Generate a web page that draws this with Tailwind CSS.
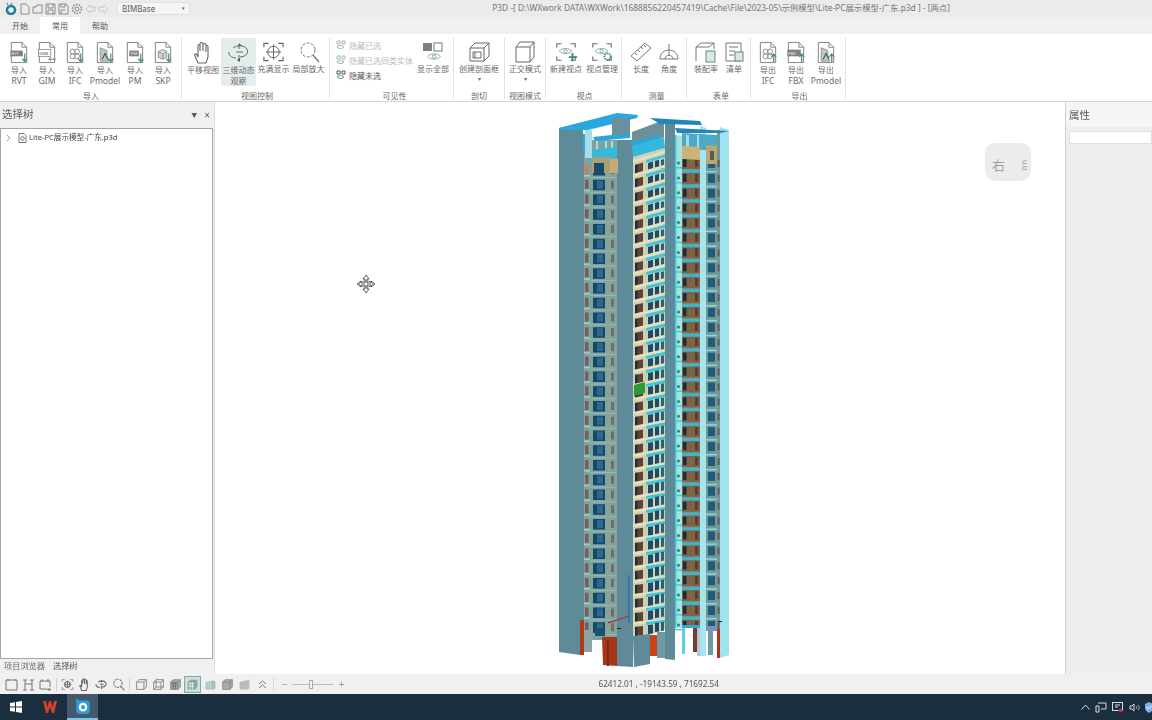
<!DOCTYPE html>
<html lang="zh-CN">
<head>
  <meta charset="UTF-8" />
  <title>P3D</title>
  <script src="https://cdn.jsdelivr.net/npm/@tailwindcss/browser@4"></script>
</head>
<body class="bg-white">
  <svg class="hidden" width="0" height="0">
    <symbol id="doc" viewBox="0 0 20 24"><path d="M2 1.5h11l5 5v16H2z M13 1.5v5h5" fill="none" stroke="#808080" stroke-width="1"/></symbol>
    <symbol id="arr-down" viewBox="0 0 20 24"><path d="M16 13v8 M13.5 18.5l2.5 3 2.5-3" fill="none" stroke="#4d8a7c" stroke-width="1.3"/></symbol>
    <symbol id="arr-up" viewBox="0 0 20 24"><path d="M16 22v-8 M13.5 16.5l2.5-3 2.5 3" fill="none" stroke="#4d8a7c" stroke-width="1.3"/></symbol>
    <symbol id="clover" viewBox="0 0 20 24"><g fill="none" stroke="#8a8a8a" stroke-width="1"><circle cx="7.5" cy="11" r="2.6"/><circle cx="12" cy="11" r="2.6"/><circle cx="7.5" cy="16" r="2.6"/><circle cx="12" cy="16" r="2.6"/></g></symbol>
    <symbol id="pm" viewBox="0 0 20 24"><path d="M5 7l7 3v5l2 6H5z" fill="#b9c9c6" stroke="#888" stroke-width=".8"/><path d="M7 19l3-6 3 6" fill="none" stroke="#555" stroke-width="1.2"/></symbol>
    <symbol id="eye" viewBox="0 0 20 12"><path d="M1 6c3-5 15-5 18 0-3 5-15 5-18 0z" fill="none" stroke="#5c8a86" stroke-width="1"/><circle cx="10" cy="6" r="2.4" fill="none" stroke="#5c8a86"/></symbol>
    <symbol id="corners" viewBox="0 0 24 22"><path d="M2 6V2h5 M17 2h5v4 M2 16v4h5 M22 16v4h-5" fill="none" stroke="#666" stroke-width="1.2"/></symbol>
    <symbol id="box" viewBox="0 0 16 16"><path d="M2 5h9v9H2z M2 5l3-3h9v9l-3 3 M11 5l3-3" fill="none" stroke="#777" stroke-width="1"/></symbol>
    <symbol id="solid" viewBox="0 0 16 16"><path d="M2 5l3-3h9v9l-3 3H2z" fill="#a3adab" stroke="#777" stroke-width=".8"/><path d="M2 5h9v9 M11 5l3-3" fill="none" stroke="#777" stroke-width=".8"/></symbol>
  </svg>

  <div class="w-[1152px] h-[720px] overflow-hidden flex flex-col blur-[0.45px] font-['Noto_Sans','Noto_Sans_CJK_SC',sans-serif] text-[#6a6a6a]">

    <!-- title bar -->
    <div class="h-[17px] bg-[#ebebeb] flex items-center pl-[5px] gap-[2px] shrink-0">
      <svg class="w-[12px] h-[13px]" viewBox="0 0 12 13"><circle cx="6" cy="8" r="4" fill="none" stroke="#1f7f9c" stroke-width="2.6"/><path d="M3 3L2 1M6 3l1-2" stroke="#3f8f7f" stroke-width="1.2"/></svg>
      <svg class="w-[11px] h-[12px]" viewBox="0 0 11 12"><path d="M2 1h5l3 3v7H2z" fill="none" stroke="#8c8c8c"/></svg>
      <svg class="w-[11px] h-[12px]" viewBox="0 0 11 12"><path d="M1 4h3l1-2h5v8H1z" fill="none" stroke="#8c8c8c"/></svg>
      <svg class="w-[11px] h-[12px]" viewBox="0 0 11 12"><path d="M1 1h9v10H1z M3 1v4h5V1 M3 11V7h5v4" fill="none" stroke="#8c8c8c"/></svg>
      <svg class="w-[11px] h-[12px]" viewBox="0 0 11 12"><path d="M1 1h7l2 2v8H1z M3 1v3h4V1 M3 11V7h4" fill="none" stroke="#8c8c8c"/></svg>
      <svg class="w-[12px] h-[12px]" viewBox="0 0 12 12"><circle cx="6" cy="6" r="2" fill="none" stroke="#8c8c8c"/><circle cx="6" cy="6" r="4.5" fill="none" stroke="#8c8c8c" stroke-width="1.6" stroke-dasharray="1.6 1.2"/></svg>
      <svg class="w-[11px] h-[10px]" viewBox="0 0 11 10"><path d="M5 1L1 5l4 4V7h5V3H5z" fill="none" stroke="#c8c8c8"/></svg>
      <svg class="w-[11px] h-[10px]" viewBox="0 0 11 10"><path d="M6 1l4 4-4 4V7H1V3h5z" fill="none" stroke="#c8c8c8"/></svg>
      <div class="ml-[6px] w-[73px] h-[13px] bg-[#f5f5f5] border border-[#e0e0e0] flex items-center justify-between px-[4px] text-[8px] leading-none text-[#555]"><span>BIMBase</span><span class="text-[5px]">▾</span></div>
      <div class="flex-1 flex justify-end pr-[202px] text-[8.4px] leading-none text-[#777] whitespace-nowrap">P3D -[ D:\WXwork DATA\WXWork\1688856220457419\Cache\File\2023-05\示例模型\Lite-PC展示模型-广东.p3d ] - [两点]</div>
    </div>

    <!-- tabs -->
    <div class="h-[17px] bg-[#f0f0f0] flex text-[8px] leading-[17px] text-center text-[#555] shrink-0">
      <div class="w-[40px]">开始</div>
      <div class="w-[40px] bg-white">常用</div>
      <div class="w-[40px]">帮助</div>
    </div>

    <!-- ribbon -->
    <div class="h-[68px] bg-white border-b border-[#d4d4d4] flex pt-[4px] text-[8px] leading-[11px] text-center whitespace-nowrap shrink-0">
      <div class="w-[182px] h-[61px] border-r border-[#e2e2e2] pl-[5px]">
        <div class="h-[52px] flex">
          <div class="w-[28px] flex flex-col items-center pt-[3px]"><svg class="w-[20px] h-[23px]" viewBox="0 0 20 24"><use href="#doc"/><rect x="1" y="10" width="13" height="6" fill="#808080"/><text x="2" y="15" font-size="4.5" fill="#eee">RVT</text><use href="#arr-down"/></svg><span>导入</span><span class="text-[8.5px]">RVT</span></div>
          <div class="w-[28px] flex flex-col items-center pt-[3px]"><svg class="w-[20px] h-[23px]" viewBox="0 0 20 24"><use href="#doc"/><rect x="1" y="9" width="13" height="7" fill="#fff" stroke="#808080" stroke-width=".8"/><text x="2" y="15" font-size="4.5" fill="#444">GIM</text><path d="M19 19h-7m2-2l-2 2 2 2" fill="none" stroke="#4d8a7c"/></svg><span>导入</span><span class="text-[8.5px]">GIM</span></div>
          <div class="w-[28px] flex flex-col items-center pt-[3px]"><svg class="w-[20px] h-[23px]" viewBox="0 0 20 24"><use href="#doc"/><use href="#clover"/><use href="#arr-down"/></svg><span>导入</span><span class="text-[8.5px]">IFC</span></div>
          <div class="w-[32px] flex flex-col items-center pt-[3px]"><svg class="w-[20px] h-[23px]" viewBox="0 0 20 24"><use href="#doc"/><use href="#pm"/><use href="#arr-down"/></svg><span>导入</span><span class="text-[8.5px]">Pmodel</span></div>
          <div class="w-[28px] flex flex-col items-center pt-[3px]"><svg class="w-[20px] h-[23px]" viewBox="0 0 20 24"><use href="#doc"/><rect x="4" y="10" width="10" height="6" fill="#808080"/><text x="5.5" y="15" font-size="4.5" fill="#eee">PM</text><use href="#arr-down"/></svg><span>导入</span><span class="text-[8.5px]">PM</span></div>
          <div class="w-[28px] flex flex-col items-center pt-[3px]"><svg class="w-[20px] h-[23px]" viewBox="0 0 20 24"><use href="#doc"/><path d="M5 11l5-2 4 2v6l-4 2-5-2z M5 11l5 2 4-2 M10 13v6" fill="#cdd5d1" stroke="#808080" stroke-width=".8"/><use href="#arr-down"/></svg><span>导入</span><span class="text-[8.5px]">SKP</span></div>
        </div>
        <div class="leading-[12px] pr-[4px]">导入</div>
      </div>

      <div class="w-[148px] h-[61px] border-r border-[#e2e2e2] pl-[3px]">
        <div class="h-[52px] flex">
          <div class="w-[36px] flex flex-col items-center pt-[3px]"><svg class="w-[22px] h-[23px]" viewBox="0 0 22 23"><path d="M6 22l-3-7c-1-2 1-3 2-1l1 2V5c0-2 2-2 2 0v5V3c0-2 3-2 3 0v7V4c0-2 3-2 3 0v7V6c0-2 2-2 2 0v10l-2 6z" fill="none" stroke="#666" stroke-width="1.1"/></svg><span>平移视图</span></div>
          <div class="w-[35px] h-[48px] bg-[#e4ecec] flex flex-col items-center pt-[3px]"><svg class="w-[24px] h-[23px]" viewBox="0 0 24 23"><path d="M6 7c4-3 10-3 13 0 4 4 0 9-6 9M9 17c-4 0-8-3-7-6" fill="none" stroke="#666"/><path d="M12 3v5M12 14v6M9 11h7" fill="none" stroke="#666"/><path d="M12 2l3 3h-3zM10 19l3-2v4z" fill="#555"/></svg><span>三维动态</span><span>观察</span></div>
          <div class="w-[35px] flex flex-col items-center pt-[3px]"><svg class="w-[23px] h-[22px]" viewBox="0 0 24 22"><use href="#corners"/><circle cx="12" cy="11" r="6" fill="none" stroke="#666"/><path d="M12 3v16M4 11h16" stroke="#666"/></svg><span>充满显示</span></div>
          <div class="w-[35px] flex flex-col items-center pt-[3px]"><svg class="w-[22px] h-[22px]" viewBox="0 0 22 22"><circle cx="10" cy="9" r="7" fill="none" stroke="#777" stroke-dasharray="3 1.5"/><path d="M15 14l6 7" stroke="#777" stroke-width="1.3"/></svg><span>局部放大</span></div>
        </div>
        <div class="leading-[12px]">视图控制</div>
      </div>

      <div class="w-[124px] h-[61px] border-r border-[#e2e2e2] pl-[6px]">
        <div class="h-[52px] flex">
          <div class="w-[79px] flex flex-col gap-[4px] pt-[2px] text-left">
            <div class="flex items-center gap-[3px] text-[#bbb]"><svg class="w-[10px] h-[11px]" viewBox="0 0 10 11"><path d="M1 1h3v3H1zM6 1h3v3H6z" fill="none" stroke="#a8b8b4"/><path d="M1 7c2-2 5-2 7 0-2 2-5 2-7 0z" fill="none" stroke="#8fb0a8"/></svg><span>隐藏已选</span></div>
            <div class="flex items-center gap-[3px] text-[#bbb]"><svg class="w-[10px] h-[11px]" viewBox="0 0 10 11"><path d="M1 1h3v3H1zM6 1h3v3H6z" fill="none" stroke="#a8b8b4"/><path d="M1 7c2-2 5-2 7 0-2 2-5 2-7 0z" fill="none" stroke="#8fb0a8"/></svg><span>隐藏已选同类实体</span></div>
            <div class="flex items-center gap-[3px] text-[#555]"><svg class="w-[10px] h-[11px]" viewBox="0 0 10 11"><path d="M1 1h3v3H1zM6 1h3v3H6z" fill="none" stroke="#555"/><path d="M1 7c2-2 5-2 7 0-2 2-5 2-7 0z" fill="none" stroke="#4f8c80"/></svg><span>隐藏未选</span></div>
          </div>
          <div class="w-[36px] flex flex-col items-center pt-[3px]"><svg class="w-[24px] h-[22px]" viewBox="0 0 24 22"><rect x="2" y="2" width="9" height="8" fill="#808080"/><rect x="13" y="2" width="8" height="8" fill="none" stroke="#777"/><use href="#eye" x="6" y="11" width="14" height="9"/></svg><span>显示全部</span></div>
        </div>
        <div class="leading-[12px]">可见性</div>
      </div>

      <div class="w-[51px] h-[61px] border-r border-[#e2e2e2]">
        <div class="h-[52px] flex flex-col items-center pt-[3px]"><svg class="w-[22px] h-[22px]" viewBox="0 0 22 22"><path d="M2 7h14v13H2z M2 7l5-5h14v13l-5 5 M16 7l5-5" fill="none" stroke="#666"/><path d="M5 11h8v6H5z M7 11v6" fill="none" stroke="#666"/></svg><span>创建剖面框</span><span class="text-[6px] leading-[11px]">▾</span></div>
        <div class="leading-[12px]">剖切</div>
      </div>

      <div class="w-[41px] h-[61px] border-r border-[#e2e2e2]">
        <div class="h-[52px] flex flex-col items-center pt-[3px]"><svg class="w-[20px] h-[22px]" viewBox="0 0 20 22"><path d="M1 6h14v15H1z M1 6l4-5h14v15l-4 5 M15 6l4-5" fill="none" stroke="#666"/></svg><span>正交模式</span><span class="text-[6px] leading-[11px]">▾</span></div>
        <div class="leading-[12px]">视图模式</div>
      </div>

      <div class="w-[76px] h-[61px] border-r border-[#e2e2e2] pl-[2px]">
        <div class="h-[52px] flex">
          <div class="w-[36px] flex flex-col items-center pt-[3px]"><svg class="w-[22px] h-[22px]" viewBox="0 0 24 22"><use href="#corners"/><use href="#eye" x="4" y="5" width="15" height="10"/><path d="M19 12v9M15 16.500h9" stroke="#3d8a78" stroke-width="2"/></svg><span>新建视点</span></div>
          <div class="w-[36px] flex flex-col items-center pt-[3px]"><svg class="w-[22px] h-[22px]" viewBox="0 0 24 22"><use href="#corners"/><use href="#eye" x="4" y="5" width="15" height="10"/><circle cx="18" cy="16" r="3.500" fill="none" stroke="#3d8a78" stroke-width="2" stroke-dasharray="1.500 1"/></svg><span>视点管理</span></div>
        </div>
        <div class="leading-[12px]">视点</div>
      </div>

      <div class="w-[65px] h-[61px] border-r border-[#e2e2e2] pl-[5px]">
        <div class="h-[52px] flex">
          <div class="w-[28px] flex flex-col items-center pt-[3px]"><svg class="w-[22px] h-[22px]" viewBox="0 0 22 22"><path d="M1 15L15 2l6 5L7 20z M5 12l2 2M8 9l2 2M11 6l2 2M14 4l2 2" fill="none" stroke="#777"/></svg><span>长度</span></div>
          <div class="w-[28px] flex flex-col items-center pt-[3px]"><svg class="w-[22px] h-[22px]" viewBox="0 0 22 22"><path d="M2 18C2 6 20 6 20 18z M7 18c0-5 8-5 8 0 M11 3v11" fill="none" stroke="#777"/></svg><span>角度</span></div>
        </div>
        <div class="leading-[12px]">测量</div>
      </div>

      <div class="w-[64px] h-[61px] border-r border-[#e2e2e2] pl-[5px]">
        <div class="h-[52px] flex">
          <div class="w-[28px] flex flex-col items-center pt-[3px]"><svg class="w-[22px] h-[22px]" viewBox="0 0 22 22"><path d="M1 20V6h13l5-4 M1 6l5-4h13v6" fill="none" stroke="#777"/><rect x="11" y="10" width="9" height="11" fill="#dbe7e4" stroke="#5c8a86"/></svg><span>装配率</span></div>
          <div class="w-[28px] flex flex-col items-center pt-[3px]"><svg class="w-[20px] h-[22px]" viewBox="0 0 20 22"><path d="M2 2h15v18H2z M5 6h9M5 10h6M5 14h5" fill="none" stroke="#777"/><rect x="11" y="11" width="8" height="9" fill="#dbe7e4" stroke="#5c8a86"/></svg><span>清单</span></div>
        </div>
        <div class="leading-[12px]">表单</div>
      </div>

      <div class="w-[95px] h-[61px] border-r border-[#e2e2e2] pl-[3px]">
        <div class="h-[52px] flex">
          <div class="w-[28px] flex flex-col items-center pt-[3px]"><svg class="w-[20px] h-[23px]" viewBox="0 0 20 24"><use href="#doc"/><use href="#clover"/><use href="#arr-up"/></svg><span>导出</span><span class="text-[8.5px]">IFC</span></div>
          <div class="w-[28px] flex flex-col items-center pt-[3px]"><svg class="w-[20px] h-[23px]" viewBox="0 0 20 24"><use href="#doc"/><rect x="1" y="9" width="14" height="7" fill="#808080"/><text x="2" y="15" font-size="4.500" fill="#eee">FBX</text><use href="#arr-up"/></svg><span>导出</span><span class="text-[8.5px]">FBX</span></div>
          <div class="w-[32px] flex flex-col items-center pt-[3px]"><svg class="w-[20px] h-[23px]" viewBox="0 0 20 24"><use href="#doc"/><use href="#pm"/><use href="#arr-up"/></svg><span>导出</span><span class="text-[8.5px]">Pmodel</span></div>
        </div>
        <div class="leading-[12px]">导出</div>
      </div>
    </div>

    <!-- main area -->
    <div class="flex-1 min-h-0 flex">
      <!-- selection tree -->
      <div class="w-[215px] bg-[#f0f0f0] flex flex-col border-r border-[#dcdcdc] shrink-0">
        <div class="h-[26px] flex items-center pl-[2px] pr-[4px] text-[10.5px] text-[#5a5a5a]">
          <span class="flex-1">选择树</span>
          <span class="text-[6px] mr-[7px]">▼</span>
          <span class="text-[10px] leading-none">×</span>
        </div>
        <div class="flex-1 mr-[1px] bg-white border border-[#a5a5a5] pl-[5px] pt-[3px]">
          <div class="flex items-center h-[12px] text-[7.6px] leading-none text-[#444] whitespace-nowrap">
            <svg class="w-[5px] h-[8px] mr-[7px]" viewBox="0 0 5 8"><path d="M1 1l3 3-3 3" fill="none" stroke="#999"/></svg>
            <svg class="w-[9px] h-[10px] mr-[2px]" viewBox="0 0 9 10"><path d="M1 .500h5l2 2v7H1z" fill="none" stroke="#555" stroke-width=".8"/><circle cx="4.500" cy="5.500" r="1.800" fill="none" stroke="#555" stroke-width=".8"/></svg>
            <span>Lite-PC展示模型-广东.p3d</span>
          </div>
        </div>
        <div class="h-[15px] flex items-center pl-[4px] gap-[8px] text-[8.2px] leading-none text-[#6a6a6a]"><span>项目浏览器</span><span class="text-[#555]">选择树</span></div>
      </div>

      <!-- 3D viewport -->
      <div class="relative flex-1 bg-white">
        <svg id="model" class="block w-[850px] h-[572px] blur-[0.5px]" viewBox="215 102 850 572"></svg>
        <!-- view cube -->
        <div class="absolute left-[770px] top-[41px] w-[46px] h-[38px] rounded-[10px] bg-[#ececec] flex items-center justify-between pl-[7px] pr-[1px] pt-[6px] text-[#a0a0a0]"><span class="text-[13px] leading-none">右</span><span class="text-[11px] leading-none scale-x-50">后</span></div>
        <!-- orbit cursor -->
        <svg class="absolute left-[141px] top-[172px] w-[20px] h-[20px]" viewBox="0 0 20 20"><path d="M10 1l3 4h-2v4h4V7l4 3-4 3v-2h-4v4h2l-3 4-3-4h2v-4H5v2l-4-3 4-3v2h4V5H7z" fill="#fff" stroke="#333" stroke-width=".8"/><ellipse cx="10" cy="10" rx="7" ry="3" fill="none" stroke="#555" stroke-width=".7"/></svg>
      </div>

      <!-- properties -->
      <div class="w-[87px] bg-[#eeeeee] border-l border-[#d0d0d0] flex flex-col shrink-0">
        <div class="h-[25px] bg-[#f5f5f5] pl-[3px] text-[10.5px] leading-[27px] text-[#5a5a5a]">属性</div>
        <div class="h-[13px] mt-[4px] ml-[3px] bg-white border border-[#e0e0e0]"></div>
      </div>
    </div>

    <!-- status bar -->
    <div class="h-[20px] bg-[#f0f0f0] flex items-center pl-[5px] shrink-0">
      <svg class="w-[13px] h-[13px] mr-[4px]" viewBox="0 0 13 13"><path d="M1 2h11v10H1z M3 1v2M10 1v2" fill="none" stroke="#777"/></svg>
      <svg class="w-[13px] h-[13px] mr-[4px]" viewBox="0 0 13 13"><path d="M3 2v10M10 2v10M1 2h4M8 2h4M1 12h4M8 12h4M3 6h7" fill="none" stroke="#777"/></svg>
      <svg class="w-[13px] h-[13px]" viewBox="0 0 13 13"><path d="M1 3h10v6M1 3v8h7 M3 1v3M9 1v3M10 10v3M8 11.500h4" fill="none" stroke="#777"/></svg>
      <div class="w-px h-[13px] bg-[#d0d0d0] ml-[4px] mr-[4px]"></div>
      <svg class="w-[13px] h-[13px] mr-[4px]" viewBox="0 0 24 22"><use href="#corners"/><circle cx="12" cy="11" r="5" fill="none" stroke="#666" stroke-width="2"/><path d="M12 4v14M5 11h14" stroke="#666" stroke-width="1.500"/></svg>
      <svg class="w-[13px] h-[13px] mr-[4px]" viewBox="0 0 22 23"><path d="M6 22l-3-7c-1-2 1-3 2-1l1 2V5c0-2 2-2 2 0v5V3c0-2 3-2 3 0v7V4c0-2 3-2 3 0v7V6c0-2 2-2 2 0v10l-2 6z" fill="none" stroke="#666" stroke-width="1.800"/></svg>
      <svg class="w-[13px] h-[13px] mr-[4px]" viewBox="0 0 24 23"><path d="M6 7c4-3 10-3 13 0 4 4 0 9-6 9M9 17c-4 0-8-3-7-6M12 3v5M12 14v6M9 11h7" fill="none" stroke="#666" stroke-width="2"/></svg>
      <svg class="w-[13px] h-[13px]" viewBox="0 0 22 22"><circle cx="10" cy="9" r="7" fill="none" stroke="#777" stroke-width="1.800" stroke-dasharray="3 1.500"/><path d="M15 14l6 7" stroke="#777" stroke-width="2"/></svg>
      <div class="w-px h-[13px] bg-[#d0d0d0] ml-[4px] mr-[5px]"></div>
      <svg class="w-[13px] h-[13px] mr-[4px]" viewBox="0 0 16 16"><use href="#box"/></svg>
      <svg class="w-[13px] h-[13px] mr-[4px]" viewBox="0 0 16 16"><use href="#box"/><path d="M5 2v9h9M5 11l-3 3" fill="none" stroke="#777"/></svg>
      <svg class="w-[13px] h-[13px] mr-[2px]" viewBox="0 0 16 16"><use href="#solid"/><path d="M3 7h7M3 10h7M5 5v9M8 5v9" stroke="#5f7370" stroke-width="1"/></svg>
      <div class="w-[17px] h-[17px] bg-[#c9e0dd] border border-[#7fa8a4] flex items-center justify-center mr-[3px]"><svg class="w-[13px] h-[13px]" viewBox="0 0 16 16"><path d="M2 5l3-3h9v9l-3 3H2z" fill="#8ba7a3"/><path d="M3 7h7M3 10h7M5 5v9M8 5v9" stroke="#e6f0ee" stroke-width="1"/></svg></div>
      <svg class="w-[13px] h-[13px] mr-[4px]" viewBox="0 0 16 16"><path d="M2 5l10-2 2 2v8l-3 1H2z" fill="#a7bdb9"/><path d="M3 7h7M3 10h7M5 5v9M8 5v9" stroke="#eef" stroke-width="1" stroke-dasharray="1 1"/></svg>
      <svg class="w-[13px] h-[13px] mr-[4px]" viewBox="0 0 16 16"><use href="#solid"/></svg>
      <svg class="w-[13px] h-[13px] mr-[4px]" viewBox="0 0 16 16"><path d="M2 5l12-3v11l-3 1H2z" fill="#b8bcbb"/></svg>
      <svg class="w-[9px] h-[9px] ml-[3px]" viewBox="0 0 9 9"><path d="M1 4l3.500-3L8 4M1 8l3.500-3L8 8" fill="none" stroke="#777"/></svg>
      <div class="w-px h-[12px] bg-[#d8d8d8] ml-[6px] mr-[8px]"></div>
      <span class="text-[10px] leading-none text-[#999]">−</span>
      <div class="relative w-[41px] h-px bg-[#bbb] mx-[4px]"><div class="absolute left-[17px] top-[-4px] w-[4px] h-[9px] bg-[#f5f5f5] border border-[#aaa]"></div></div>
      <span class="text-[10px] leading-none text-[#999] ml-[2px]">+</span>
      <div class="flex-1 pl-[254px] text-[8.2px] leading-none text-[#555] whitespace-nowrap">62412.01 , -19143.59 , 71692.54</div>
    </div>

    <!-- taskbar -->
    <div class="h-[26px] bg-[#1b2e3e] flex items-center shrink-0">
      <svg class="w-[12px] h-[12px] ml-[10px]" viewBox="0 0 12 12"><path d="M0 2l5-.8v4.400H0zM6 1l6-1v5.600H6zM0 6.400h5v4.400L0 10zM6 6.400h6V12l-6-1z" fill="#fff"/></svg>
      <svg class="w-[16px] h-[14px] ml-[20px]" viewBox="0 0 16 14"><path d="M1 1l3 12h2l2-6 2 6h2l3-12h-3l-1.500 6L9 1H7L5.500 7 4 1z" fill="#d8402a"/></svg>
      <div class="w-[31px] h-[26px] ml-[9px] bg-[#45596a] border-b-2 border-[#7cc4ee] flex items-center justify-center">
        <svg class="w-[16px] h-[18px]" viewBox="0 0 14 16"><path d="M1 1l3 2h6a3 3 0 013 3v6a3 3 0 01-3 3H4a3 3 0 01-3-3z" fill="#2a9fdc"/><circle cx="7" cy="9" r="2.800" fill="none" stroke="#fff" stroke-width="2"/></svg>
      </div>
      <div class="flex-1"></div>
      <svg class="w-[9px] h-[6px] mr-[5px]" viewBox="0 0 9 6"><path d="M.5 5.500l4-4.500 4 4.500" fill="none" stroke="#d8dde0"/></svg>
      <svg class="w-[12px] h-[11px] mr-[5px]" viewBox="0 0 12 11"><path d="M3 1h8v6H6M1 4h3v6H1z" fill="none" stroke="#d8dde0"/></svg>
      <svg class="w-[12px] h-[11px] mr-[5px]" viewBox="0 0 12 11"><rect x=".5" y=".5" width="10" height="8" fill="none" stroke="#d8dde0"/><path d="M3 3h5M3 5h3" stroke="#d8dde0"/><circle cx="8.500" cy="8.500" r="2" fill="#c0303a"/></svg>
      <svg class="w-[11px] h-[11px] mr-[5px]" viewBox="0 0 11 11"><path d="M1 4h2l2-2v7L3 7H1z" fill="none" stroke="#d8dde0"/><path d="M7 4c1 1 1 2 0 3M9 3c1.500 1.500 1.500 3.500 0 5" fill="none" stroke="#a8b0b5"/></svg>
      <svg class="w-[8px] h-[12px] mr-[-1px] shrink-0" viewBox="0 0 8 12"><path d="M4 1l4 2v4c0 2-2 4-4 5-2-1-4-3-4-5V3z" fill="#7fb0f0"/><path d="M1.500 6l2 2 3-3" fill="none" stroke="#fff"/></svg>
    </div>
  </div>

  <script>
    // tower model, drawn in page coordinates (viewBox starts at the viewport corner)
    const out = [];
    const poly = (pts, fill) => out.push(`<polygon points="${pts}" fill="${fill}"/>`);
    const rect = (x, y, w, h, fill) => out.push(`<rect x="${x}" y="${y}" width="${w}" height="${h}" fill="${fill}"/>`);
    const skew = (x, y, w, h, k, fill) => poly(`${x},${y} ${x + w},${y + k * w} ${x + w},${y + k * w + h} ${x},${y + h}`, fill);

    const wall = '#5f8b98';
    // big faces
    poly('559,128 584,122 584,655 580,655 559,652', wall);
    poly('584,134 617,128 617,640 584,640', '#7fa2a2');
    poly('617,138 633,134 633,667 617,666', wall);
    poly('633,157 665,148 665,630 633,640', '#cfd0b2');
    poly('665,122 675,124 675,660 665,659', wall);
    poly('675,135 682,136 682,628 675,628', '#a9e2dc');
    poly('682,150 700,151 700,626 682,628', '#94896a');
    poly('700,125 706,128 706,656 700,656', '#a5e5ee');
    poly('706,150 717,151 717,626 706,626', '#6f9a98');
    poly('717,130 720,130 720,658 717,658', '#6f9a98');
    poly('720,127 729,130 729,655 720,658', '#9fe3f0');

    // left facade
    for (let i = 0; i < 32; i++) {
      const y = 165 + 14.75 * i;
      rect(585, y, 3.5, 9, i === 0 ? '#d9795a' : '#7a5d55');
      rect(584, y + 10, 6, 1.5, '#a3cbd0');
      rect(593, y, 12, 10.500, '#174666');
      rect(597, y + 1, 6, 8, '#2a6a8c');
      rect(590, y + 12, 27, 1, '#9ab8b4');
      rect(611, y + 1, 3, 8, '#736f60');
      rect(605, y, 6, 11, '#86a596');
    }

    // centre facade, rows slope up to the right
    for (let i = 0; i < 34; i++) {
      const y = 163 + 14 * i;
      const k = -0.3 + 0.18 * (i / 33);
      skew(633, y - 3, 32, 3, k, '#e4dfbe');
      skew(646, y - 3, 19, 3, k, '#3fc6da');
      skew(635, y + 2, 8, 9, k, '#5e4434');
      skew(635, y + 2, 2.500, 9, k, '#1a2f40');
      skew(645, y, 2, 9, k, '#c9cdb8');
      skew(648, y, 5, 9, k, '#1f4a66');
      skew(655, y - 2, 4, 9, k, '#1f4a66');
      skew(661, y - 3, 3, 9, k, '#2c6075');
    }
    // green selected panel
    poly('634,385 645,382 645,393 634,396', '#2e9a35');

    // right facade
    for (let i = 0; i < 32; i++) {
      const y = 158 + 14.9 * i;
      rect(682, y - 3, 18, 3, '#38b5d4');
      rect(682, y, 18, 11, '#7c6446');
      rect(683, y + 1, 3.500, 8, '#1c2c34');
      rect(695, y + 1, 3, 8, '#5f3a2e');
      rect(708, y + 1, 7, 9, '#235a79');
      rect(706, y - 2, 11, 1.500, '#8fd5dc');
      out.push(`<circle cx="678.500" cy="${y + 5}" r="1.500" fill="#2f7f8e"/>`);
      rect(675, y + 9, 7, 1.500, '#3ccde0');
      rect(717.500, y + 2, 2, 7, '#6b5a4a');
    }
    rect(675, 135, 1.500, 493, '#3ccde0');

    // roof structure
    rect(583, 118, 50, 22, '#fff');
    poly('559,128 617,113 638,115 637,118 588,130 562,130', '#27a8de');
    rect(612, 118, 18, 20, '#6b8f9c');
    rect(585, 130, 7, 28, '#a5dce8');
    rect(583, 134, 2, 20, '#3aa5cf');
    poly('593,137 630,133 630,138 595,141', '#2aa6d8');
    rect(596, 141, 2, 17, '#a5dce8');
    rect(605, 141, 2, 17, '#a5dce8');
    rect(611, 141, 2, 17, '#a5dce8');
    poly('592,150 617,147 617,158 592,158', '#34b8dc');
    poly('632,132 664,120 664,137 632,146', '#6d8f9a');
    poly('630,142 660,135 660,140 633,147', '#2aa6d8');
    poly('632,146 664,137 665,148 633,157', '#34b8dc');
    poly('650,118 700,121 702,125 660,124', '#1f86b8');
    poly('675,128 729,131 720,133 677,133', '#2088b8');
    poly('682,133 717,135 717,150 682,150', '#4ea9c6');
    rect(686, 135, 3, 15, '#a5dce8');
    rect(697, 135, 2, 15, '#a5dce8');
    poly('682,146 700,147 700,160 682,159', '#c9b47a');
    poly('706,145 717,146 717,164 706,164', '#b9a872');
    rect(710, 151, 4, 9, '#5b5a4c');
    poly('592,157 610,157 610,173 592,173', '#a9a078');
    rect(594, 163, 10, 11, '#1b4a6c');
    rect(610, 159, 8, 14, '#c4ac72');

    // ground floor
    rect(580, 620, 4, 35, '#b03a1e');
    rect(584, 630, 8, 22, '#8aa6a6');
    rect(592, 640, 3, 12, '#fff');
    rect(595, 628, 10, 8, '#1d4f72');
    poly('602,637 617,637 617,666 603,665', '#a8341a');
    rect(607, 640, 2, 26, '#7a2a18');
    poly('633,636 650,634 650,664 634,667', wall);
    rect(650, 635, 7, 21, '#c9421a');
    rect(657, 632, 8, 26, '#6f9aa5');
    rect(682, 628, 3, 26, '#5fd0e0');
    rect(685, 628, 10, 20, '#fff');
    rect(693, 628, 4, 24, '#7a3a30');
    rect(697, 628, 3, 28, '#b0c8d0');
    rect(682, 625, 18, 3, '#30a9da');
    rect(706, 626, 11, 5, '#7a90c0');
    rect(708, 631, 5, 24, '#6f9aa5');
    rect(713, 631, 4, 24, '#fff');
    rect(717, 629, 3, 29, '#a8341a');

    // axis lines
    rect(628, 575, 1.500, 48, '#2f70b8');
    poly('608,622 628,616 628,617 608,623.500', '#b03030');
    rect(617, 628, 4, 1, '#223');
    rect(718, 621, 4, 1, '#223');

    document.getElementById('model').innerHTML = out.join('');
  </script>
</body>
</html>
